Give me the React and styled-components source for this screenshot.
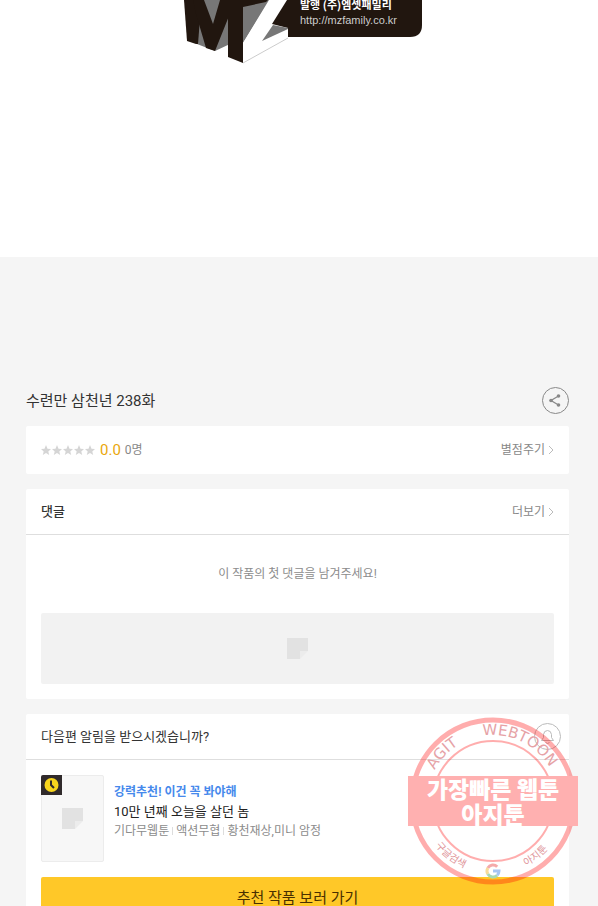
import React from 'react';
import styled, { createGlobalStyle } from 'styled-components';

const GlobalStyle = createGlobalStyle`
  * {
    box-sizing: border-box;
  }

  body {
    margin: 0;
    background: #f5f5f5;
    color: #333;
    font-family: Roboto, 'Noto Sans CJK KR', sans-serif;
    font-size: 12px;
    line-height: 20px;
  }

  h1, h2, p {
    margin: 0;
    font-weight: 400;
  }

  a {
    color: inherit;
    text-decoration: none;
  }

  button {
    padding: 0;
    border: 0;
    background: none;
    font: inherit;
    cursor: pointer;
  }

  svg {
    display: block;
    flex: none;
  }
`;

const Page = styled.div`
  overflow: hidden;
`;

const Viewer = styled.section`
  display: flex;
  justify-content: center;
  height: 257px;
  padding-left: 10px;
  background: #fff;
`;

const Main = styled.main`
  padding: 128px 29px 16px 26px;
`;

const TitleRow = styled.header`
  display: flex;
  align-items: center;
  justify-content: space-between;
  height: 31px;
  margin-bottom: 10px;
`;

const Title = styled.h1`
  font-size: 15px;
`;

const Card = styled.section`
  position: relative;
  margin-bottom: 15px;
  border-radius: 2px;
  background: #fff;
`;

const CardHead = styled.div`
  display: flex;
  align-items: center;
  justify-content: space-between;
  height: ${({ $plain }) => ($plain ? '48px' : '46px')};
  padding: 0 15px;
  padding-right: ${({ $tight }) => ($tight ? '8px' : '15px')};
  border-bottom: ${({ $plain }) => ($plain ? '0' : '1px solid #dedede')};
`;

const CardTitle = styled.h2`
  font-size: 13px;
  font-weight: ${({ $strong }) => ($strong ? 500 : 400)};
`;

const Score = styled.div`
  display: flex;
  align-items: center;
  gap: 4px;
  color: #888;
`;

const Point = styled.strong`
  color: #eaa70c;
  font-size: 15px;
  font-weight: 400;
`;

const MoreLink = styled.a`
  display: flex;
  align-items: center;
  gap: 3px;
  color: #888;
`;

const Comments = styled.div`
  padding: 29px 15px 15px;
`;

const EmptyText = styled.p`
  margin-bottom: 29px;
  color: #8c8c8c;
  text-align: center;
`;

const Banner = styled.a`
  display: flex;
  align-items: center;
  justify-content: center;
  height: 71px;
  border-radius: 2px;
  background: #f2f2f2;
`;

const Recommend = styled.div`
  padding: 15px;
`;

const Work = styled.a`
  display: flex;
  gap: 10px;
  margin-bottom: 15px;
`;

const Cover = styled.div`
  position: relative;
  display: flex;
  align-items: center;
  justify-content: center;
  width: 63px;
  height: 87px;
  border: 1px solid #ececec;
  border-radius: 2px;
  background: #f7f7f7;
`;

const Badge = styled.span`
  position: absolute;
  top: -1px;
  left: -1px;
`;

const WorkInfo = styled.div`
  padding-top: 7px;
`;

const Catch = styled.p`
  color: #4689ec;
  font-weight: 700;
`;

const WorkTitle = styled.p`
  color: #222;
  font-size: 13px;
`;

const Meta = styled.p`
  display: flex;
  align-items: center;
  line-height: 18px;
  color: #8c8c8c;

  span + span::before {
    content: '';
    display: inline-block;
    height: 8px;
    margin: 0 3px;
    border-left: 1px solid #ddd;
  }
`;

const MoreButton = styled.button`
  width: 100%;
  height: 42px;
  border-radius: 2px;
  background: #ffc828;
  color: #4a3000;

  && {
    font-size: 15px;
  }
`;

const Stamp = styled.div`
  position: absolute;
  top: 0;
  right: -9px;
  pointer-events: none;
`;

const StampBand = styled.div`
  position: absolute;
  top: 62px;
  left: 0;
  width: 170px;
  height: 50px;
  background: #ffb0b0;
  color: #fff;
  font-family: 'Noto Sans CJK KR', sans-serif;
  font-size: 23px;
  font-weight: 900;
  line-height: 25px;
  text-align: center;
  white-space: nowrap;
`;

const PublisherLogo = () => (
  <svg width="240" height="66" viewBox="0 0 240 66">
    <path d="M88 0H238V25Q238 37 226 37H88Z" fill="#21160f" />
    <path d="M10 0H46V44L31 51L13 44Z" fill="#777" />
    <path d="M0 0H11L16 18L14 44L12 44L3 41Z" fill="#21160f" />
    <path d="M9 0H20L29 24L36 0H47V11L31 51L22 48L12 14Z" fill="#21160f" />
    <path d="M44 0H59V63L44 57Z" fill="#21160f" />
    <path d="M59 0H86L59 43Z" fill="#777" />
    <path d="M59 0H84L82 2L59 7Z" fill="#21160f" />
    <path d="M85 0H103L88 24L104 28V38L59 63V43Z" fill="#fff" />
    <path d="M78 41L89 25L104 28V29Z" fill="#777" />
    <path d="M104 38L59 63" fill="none" stroke="#ccc" />
    <text x="116" y="9" fill="#fff" fontSize="11" fontWeight="700" fontFamily="'Noto Sans CJK KR', sans-serif">발행 (주)엠셋패밀리</text>
    <text x="116" y="24" fill="#ccc" fontSize="11" fontFamily="'Liberation Sans', sans-serif">http://mzfamily.co.kr</text>
  </svg>
);

const ShareIcon = () => (
  <svg width="27" height="27" viewBox="0 0 27 27" fill="none" stroke="#888">
    <circle cx="13.500" cy="13.500" r="13" />
    <path d="M16.500 9L9 13.500L16.500 18" strokeWidth="1.300" />
    <g fill="#888" stroke="none">
      <circle cx="16.500" cy="9" r="1.800" />
      <circle cx="9" cy="13.500" r="1.800" />
      <circle cx="16.500" cy="18" r="1.800" />
    </g>
  </svg>
);

const BellIcon = () => (
  <svg width="27" height="27" viewBox="0 0 27 27" fill="none" stroke="#bbb">
    <circle cx="13.500" cy="13.500" r="13" />
    <path d="M7.500 17.500H19.500L17.500 14.500V11.500Q17 7.500 13.500 7.500Q10 7.500 9.500 11.500V14.500ZM11.500 19.500Q13.500 21.500 15.500 19.500" />
  </svg>
);

const Arrow = () => (
  <svg width="6" height="10" viewBox="0 0 6 10" fill="none" stroke="#bbb">
    <path d="M1 1L5 5L1 9" />
  </svg>
);

const Stars = () => (
  <svg width="55" height="11" viewBox="0 0 55 11" fill="#d5d5d5">
    {[0, 11, 22, 33, 44].map((x) => (
      <path key={x} transform={`translate(${x} 0)`} d="M5 0L6.500 3.700L10 4L7.300 6.500L8.200 10L5 8L1.800 10L2.700 6.500L0 4L3.500 3.700Z" />
    ))}
  </svg>
);

const Placeholder = () => (
  <svg width="22" height="22" viewBox="0 0 22 22" fill="#e2e2e2">
    <path d="M0 0H21V13H13V21H0Z" />
    <path d="M13 21V13H21Z" fill="#ececec" />
  </svg>
);

const ClockBadge = () => (
  <svg width="21" height="20" viewBox="0 0 21 20">
    <path d="M2 0H21V20H0V2Q0 0 2 0Z" fill="#302a2b" />
    <circle cx="10.500" cy="10" r="7" fill="#f7d51d" />
    <path d="M10 5.500V10L13 13" fill="none" stroke="#302a2b" strokeWidth="2" />
  </svg>
);

const StampArt = () => (
  <svg width="170" height="176" viewBox="0 0 170 176">
    <defs>
      <path id="arcTop" d="M19 87A66 66 0 0 1 151 87" />
      <path id="arcBottom" d="M12 87A73 73 0 0 0 158 87" />
    </defs>
    <g fill="none" stroke="#ff0000" strokeOpacity="0.32">
      <circle cx="85" cy="87" r="81" strokeWidth="5" />
      <circle cx="85" cy="87" r="60" strokeWidth="2" />
    </g>
    <g fill="#e6a2a6" fontFamily="'DejaVu Sans', sans-serif" fontSize="15" textAnchor="middle">
      <text><textPath href="#arcTop" startOffset="24%">AGIT</textPath></text>
      <text><textPath href="#arcTop" startOffset="64%">WEBTOON</textPath></text>
    </g>
    <g fill="#e09499" fontFamily="'Noto Sans CJK KR', sans-serif" fontSize="10" textAnchor="middle">
      <text><textPath href="#arcBottom" startOffset="29%">구글검색</textPath></text>
      <text><textPath href="#arcBottom" startOffset="71%">아지툰</textPath></text>
    </g>
    <g fill="none" strokeWidth="3">
      <path d="M89.200 152.800A6 6 0 0 0 79.800 154" stroke="#f5aaaa" />
      <path d="M79.800 154A6 6 0 0 0 79.800 160" stroke="#f8dc9b" />
      <path d="M79.800 160A6 6 0 0 0 89.200 161.200" stroke="#a9d9b5" />
      <path d="M89.200 161.200A6 6 0 0 0 91 157H85" stroke="#a6c5f5" />
    </g>
  </svg>
);

const App = () => {
  return (
    <Page>
      <GlobalStyle />
      <Viewer>
        <PublisherLogo />
      </Viewer>
      <Main>
        <TitleRow>
          <Title>수련만 삼천년 238화</Title>
          <button type="button" aria-label="공유"><ShareIcon /></button>
        </TitleRow>

        <Card>
          <CardHead $plain>
            <Score>
              <Stars />
              <Point>0.0</Point>
              <span>0명</span>
            </Score>
            <MoreLink href="#rate">별점주기 <Arrow /></MoreLink>
          </CardHead>
        </Card>

        <Card>
          <CardHead>
            <CardTitle $strong>댓글</CardTitle>
            <MoreLink href="#comments">더보기 <Arrow /></MoreLink>
          </CardHead>
          <Comments>
            <EmptyText>이 작품의 첫 댓글을 남겨주세요!</EmptyText>
            <Banner href="#banner" aria-label="배너"><Placeholder /></Banner>
          </Comments>
        </Card>

        <Card>
          <CardHead $tight>
            <CardTitle>다음편 알림을 받으시겠습니까?</CardTitle>
            <button type="button" aria-label="알림"><BellIcon /></button>
          </CardHead>
          <Recommend>
            <Work href="#work">
              <Cover>
                <Placeholder />
                <Badge><ClockBadge /></Badge>
              </Cover>
              <WorkInfo>
                <Catch>강력추천! 이건 꼭 봐야해</Catch>
                <WorkTitle>10만 년째 오늘을 살던 놈</WorkTitle>
                <Meta>
                  <span>기다무웹툰</span>
                  <span>액션무협</span>
                  <span>황천재상,미니 암정</span>
                </Meta>
              </WorkInfo>
            </Work>
            <MoreButton type="button">추천 작품 보러 가기</MoreButton>
          </Recommend>
          <Stamp>
            <StampArt />
            <StampBand>
              <div>가장빠른 웹툰</div>
              <div>아지툰</div>
            </StampBand>
          </Stamp>
        </Card>
      </Main>
    </Page>
  );
};

export default App;
